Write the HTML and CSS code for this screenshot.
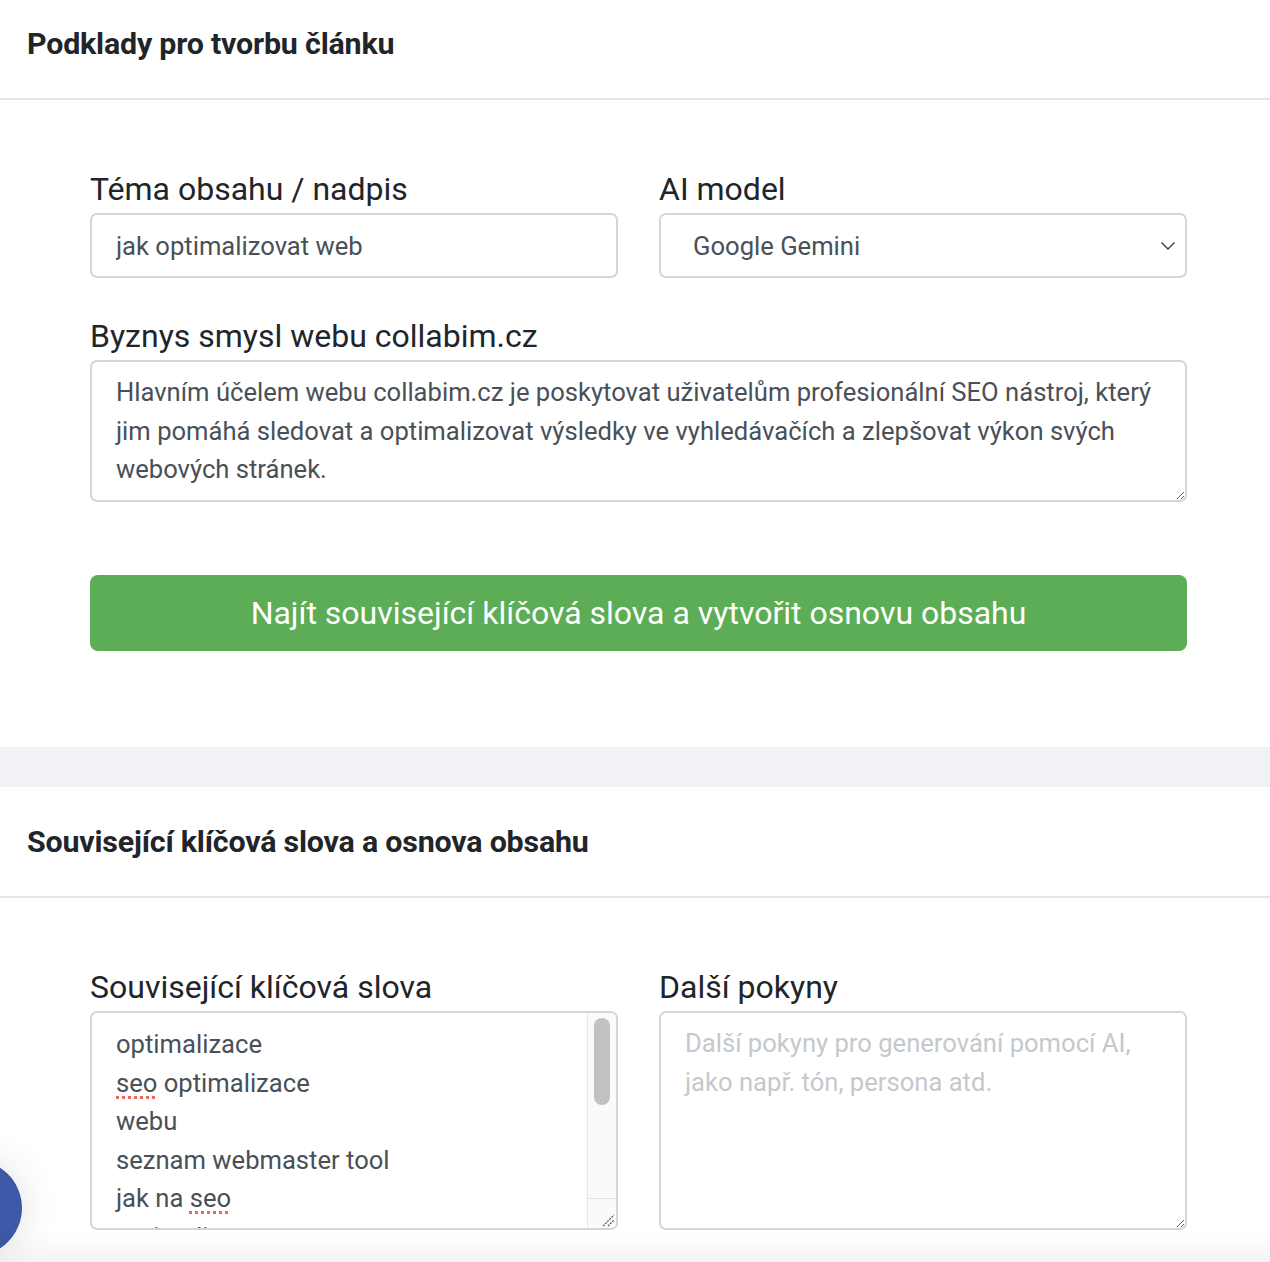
FILE: index.html
```html
<!DOCTYPE html>
<html lang="cs">
<head>
<meta charset="utf-8">
<title>Podklady pro tvorbu článku</title>
<link rel="stylesheet" href="styles.css">
</head>
<body>
<div class="page">
  <section class="card">
    <header class="card-header">
      <h2 class="card-title">Podklady pro tvorbu článku</h2>
    </header>
    <div class="card-body">
      <div class="row">
        <div class="field">
          <label class="label" for="topic">Téma obsahu / nadpis</label>
          <input class="control input" id="topic" type="text" value="jak optimalizovat web">
        </div>
        <div class="field">
          <label class="label" for="model">AI model</label>
          <div class="select" id="model">
            <span class="select-value">Google Gemini</span>
            <svg class="chevron" width="16" height="10" viewBox="0 0 16 10"><path d="M1.5 1.5 L8 8 L14.5 1.5" fill="none" stroke="#3a3d42" stroke-width="1.4"/></svg>
          </div>
        </div>
      </div>
      <div class="field field-last">
        <label class="label" for="biz">Byznys smysl webu collabim.cz</label>
        <textarea class="control textarea textarea-biz" id="biz" rows="3">Hlavním účelem webu collabim.cz je poskytovat uživatelům profesionální SEO nástroj, který jim pomáhá sledovat a optimalizovat výsledky ve vyhledávačích a zlepšovat výkon svých webových stránek.</textarea>
      </div>
      <button class="btn" type="button">Najít související klíčová slova a vytvořit osnovu obsahu</button>
    </div>
  </section>

  <div class="gap"></div>

  <section class="card">
    <header class="card-header">
      <h2 class="card-title">Související klíčová slova a osnova obsahu</h2>
    </header>
    <div class="card-body card-body-second">
      <div class="row">
        <div class="field">
          <label class="label">Související klíčová slova</label>
          <div class="control keywords" role="textbox" aria-multiline="true">
            <div class="kw-content">
              <div>optimalizace</div>
              <div><span class="typo">seo</span> optimalizace</div>
              <div>webu</div>
              <div>seznam webmaster tool</div>
              <div>jak na <span class="typo">seo</span></div>
              <div>optimalizace textu</div>
              <div>analýza webu</div>
              <div>klíčová slova</div>
              <div>rychlost webu</div>
              <div>zpětné odkazy</div>
              <div>google search console</div>
              <div>obsah webu</div>
            </div>
            <div class="kw-scrollbar">
              <div class="kw-track"><div class="kw-thumb"></div></div>
              <div class="kw-corner">
                <svg width="14" height="14" viewBox="0 0 14 14"><path d="M2 13 L13 2 M7 13 L13 7" stroke="#555" stroke-width="1.2" stroke-dasharray="2 1"/></svg>
              </div>
            </div>
          </div>
        </div>
        <div class="field">
          <label class="label" for="extra">Další pokyny</label>
          <textarea class="control textarea textarea-extra" id="extra" placeholder="Další pokyny pro generování pomocí AI, jako např. tón, persona atd."></textarea>
        </div>
      </div>
    </div>
  </section>
</div>
<div class="chat-bubble" aria-label="Chat"></div>
<div class="bottom-shade"></div>
</body>
</html>
```

FILE: styles.css
```css
* { box-sizing: border-box; }

html, body {
  margin: 0;
  padding: 0;
  background: #ffffff;
  font-family: Roboto, "Noto Sans", "Liberation Sans", sans-serif;
  color: #212529;
  overflow: hidden;
}

.page {
  margin-top: -11px;
}

.card {
  background: #ffffff;
}

.card-header {
  height: 111px;
  display: flex;
  align-items: center;
  padding: 0 27px;
  border-bottom: 2px solid #e3e3e8;
}

.card-title {
  margin: 0;
  font-size: 30.4px;
  font-weight: 700;
  letter-spacing: -0.2px;
  color: #212529;
}

.card-body {
  padding: 65px 83px 96px 90px;
}

.card-body-second {
  padding-bottom: 40px;
}

.row {
  display: grid;
  grid-template-columns: 1fr 1fr;
  column-gap: 41px;
}

.field {
  margin-bottom: 34px;
}

.field-last {
  margin-bottom: 0;
}

.label {
  display: block;
  font-size: 32px;
  line-height: 48px;
  color: #212529;
}

.control {
  display: block;
  width: 100%;
  border: 2px solid #d2d6da;
  border-radius: 7px;
  background: #fff;
  font-family: inherit;
  font-size: 25.6px;
  line-height: 38.5px;
  color: #495057;
}

.input {
  height: 65px;
  padding: 0 24px;
  outline: none;
}

.select {
  height: 65px;
  display: flex;
  align-items: center;
  justify-content: space-between;
  padding: 0 8px 0 32px;
  border: 2px solid #d2d6da;
  border-radius: 7px;
  font-size: 25.6px;
  color: #495057;
}

.chevron {
  display: block;
  margin-right: 1px;
}

.textarea {
  padding: 11px 24px;
  resize: vertical;
  outline: none;
}

.textarea-biz {
  height: 142px;
  overflow: hidden;
}

.textarea-extra {
  height: 219px;
}

.textarea-extra::placeholder {
  color: #c5c8cc;
}

.keywords {
  height: 219px;
  display: flex;
  overflow: hidden;
}

.kw-content {
  flex: 1;
  overflow: hidden;
  padding: 12px 24px 0;
}

.kw-scrollbar {
  width: 29px;
  flex: none;
  display: flex;
  flex-direction: column;
  background: #fafafa;
  border-left: 1px solid #e6e6e6;
}

.kw-track {
  flex: 1;
  padding: 5px 6px 0 6px;
}

.kw-thumb {
  height: 87px;
  border-radius: 9px;
  background: #c1c1c1;
}

.kw-corner {
  height: 30px;
  border-top: 1px solid #e3e3e3;
  display: flex;
  align-items: flex-end;
  justify-content: flex-end;
  padding: 0 1px 1px 0;
}

.kw-corner svg {
  display: block;
}

.typo {
  text-decoration: underline dotted #e8685d;
  text-decoration-thickness: 3px;
  text-underline-offset: 4px;
}

.btn {
  display: block;
  width: 100%;
  height: 76px;
  margin-top: 73px;
  border: none;
  border-radius: 8px;
  background: #5cad55;
  color: #ffffff;
  font-family: inherit;
  font-size: 32px;
  cursor: pointer;
}

.gap {
  height: 40px;
  background: #f1f2f6;
}

.chat-bubble {
  position: fixed;
  left: -74px;
  top: 1160px;
  width: 96px;
  height: 96px;
  border-radius: 50%;
  background: #3d58a6;
  box-shadow: 0 0 40px rgba(0, 0, 0, 0.12);
}

.bottom-shade {
  position: fixed;
  left: 0;
  right: 0;
  bottom: 0;
  height: 30px;
  background: linear-gradient(rgba(0, 0, 0, 0), rgba(0, 0, 0, 0.045));
  pointer-events: none;
}
```
